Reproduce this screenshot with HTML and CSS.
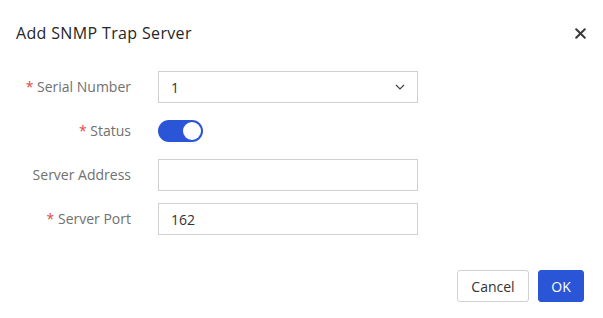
FILE: index.html
```html
<!DOCTYPE html>
<html>
<head>
<meta charset="utf-8">
<link rel="stylesheet" href="styles.css">
</head>
<body>
<div class="dialog">
  <div class="header">
    <div class="title">Add SNMP Trap Server</div>
    <button class="close" aria-label="Close">
      <svg width="11" height="11" viewBox="0 0 11 11"><path d="M1.2 1.2L9.8 9.8M9.8 1.2L1.2 9.8" stroke="#3a3a3a" stroke-width="2" stroke-linecap="round"/></svg>
    </button>
  </div>
  <div class="form">
    <div class="row">
      <label class="label"><span class="req">*</span> Serial Number</label>
      <div class="control">
        <div class="select">
          <span class="value">1</span>
          <svg class="chev" width="10" height="6" viewBox="0 0 10 6"><path d="M1 1L5 5L9 1" stroke="#444" stroke-width="1.2" fill="none"/></svg>
        </div>
      </div>
    </div>
    <div class="row">
      <label class="label"><span class="req">*</span> Status</label>
      <div class="control">
        <div class="switch"><span class="knob"></span></div>
      </div>
    </div>
    <div class="row">
      <label class="label">Server Address</label>
      <div class="control">
        <div class="input"></div>
      </div>
    </div>
    <div class="row">
      <label class="label"><span class="req">*</span> Server Port</label>
      <div class="control">
        <div class="input"><span class="value">162</span></div>
      </div>
    </div>
  </div>
  <div class="footer">
    <button class="btn btn-default">Cancel</button>
    <button class="btn btn-primary">OK</button>
  </div>
</div>
</body>
</html>
```
FILE: styles.css
```css
* { box-sizing: border-box; }
html, body { margin: 0; padding: 0; background: #fff; }
body {
  font-family: "Open Sans", "Noto Sans", sans-serif;
  color: #333;
}
.dialog {
  width: 603px;
  height: 318px;
  display: flex;
  flex-direction: column;
}
.header {
  display: flex;
  align-items: center;
  justify-content: space-between;
  height: 66px;
  padding: 0 16px 0 16px;
}
.title {
  font-size: 16px;
  color: #262626;
  letter-spacing: 0.35px;
}
.close {
  border: 0;
  background: none;
  padding: 0;
  margin-right: 1px;
  width: 11px;
  height: 11px;
  display: flex;
}
.form {
  display: flex;
  flex-direction: column;
  gap: 12px;
  padding-top: 5px;
}
.row {
  display: flex;
  align-items: center;
  height: 32px;
}
.label {
  width: 131px;
  text-align: right;
  font-size: 14px;
  color: #707070;
  flex: none;
  padding-bottom: 2px;
}
.req { color: #e0493b; }
.control {
  margin-left: 27px;
  width: 260px;
}
.select, .input {
  height: 32px;
  border: 1px solid #d0d0d0;
  display: flex;
  align-items: center;
  padding: 0 12px;
  font-size: 14px;
  color: #333;
}
.select { justify-content: space-between; }
.switch {
  width: 45px;
  height: 22px;
  border-radius: 11px;
  background: #2a55d6;
  position: relative;
}
.knob {
  position: absolute;
  right: 2px;
  top: 2px;
  width: 18px;
  height: 18px;
  border-radius: 50%;
  background: #fff;
}
.footer {
  margin-top: auto;
  display: flex;
  justify-content: flex-end;
  gap: 9px;
  padding: 0 19px 16px 0;
}
.btn {
  height: 32px;
  font-family: inherit;
  font-size: 14px;
  border-radius: 3px;
  cursor: pointer;
}
.btn-default {
  width: 72px;
  background: #fff;
  border: 1px solid #d0d0d0;
  color: #333;
}
.btn-primary {
  width: 46px;
  background: #2a55d6;
  border: 1px solid #2a55d6;
  color: #fff;
}
```
